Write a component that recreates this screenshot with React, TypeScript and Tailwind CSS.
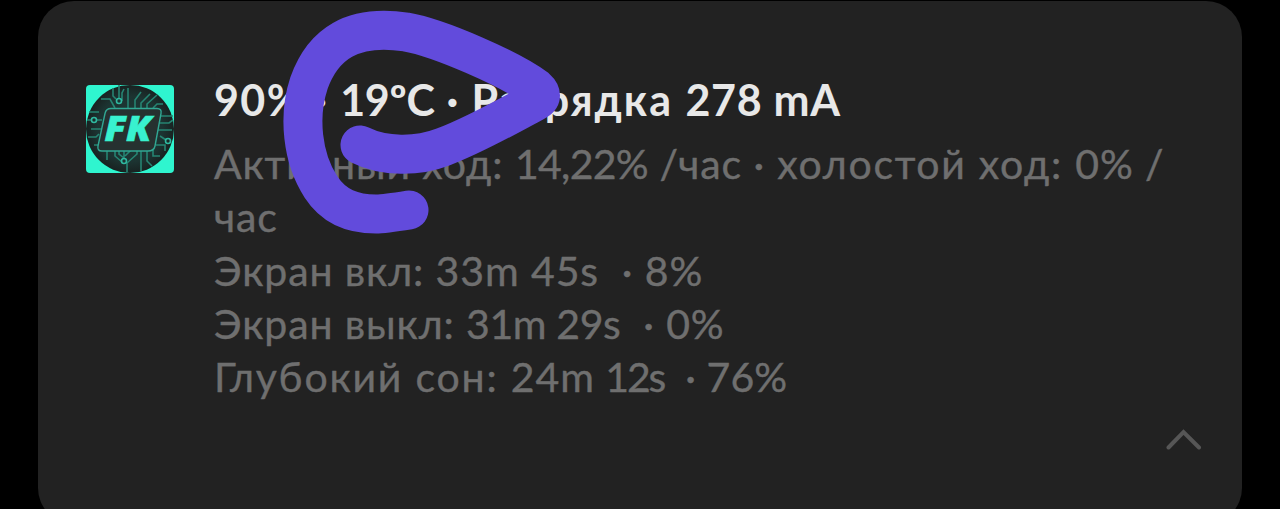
function AppLogo() {
  return (
    <svg viewBox="0 0 88 88" className="h-[88px] w-[88px] shrink-0" aria-hidden="true">
      <defs>
        <radialGradient id="chip" cx="50%" cy="50%" r="50%">
          <stop offset="0" stopColor="#1d3a38" />
          <stop offset="0.75" stopColor="#1c3331" />
          <stop offset="1" stopColor="#182221" />
        </radialGradient>
        <clipPath id="tile">
          <rect width="88" height="88" rx="4" />
        </clipPath>
      </defs>
      <rect width="88" height="88" rx="4" fill="#2ff5cf" />
      <g clipPath="url(#tile)">
        <circle cx="44" cy="44" r="44" fill="url(#chip)" />
        <g fill="none" stroke="#268472" strokeWidth="1.6">
          <path d="M33 0v13M27 3v8l3 3M42 3v20M49 23v-8l6-8M55 23v-5l9-9M61 23v-4l10-9M67 23l4-4h6M15 14h9l5 9M38 4l-2 4v8" />
          <path d="M3 27h10M1 35h4M11 35h5M5 44h10M2 52h8l3-3M8 60h4M75 31h12M73 38h10l4-3M72 45h14M74 51l6 4M70 60h9v6" />
          <path d="M21 65v10M29 65v6l7 6M33 65v4l5 4M38 65v8M45 65l-6 6M51 65v4l-10 9v9M55 65v21M61 65v11l5 5M67 65v6h7" />
          <g stroke="#2fb9a0">
            <circle cx="33" cy="16" r="2.5" />
            <circle cx="8" cy="35" r="2.5" />
            <circle cx="38" cy="76" r="2.5" />
            <circle cx="82" cy="56" r="2.5" />
          </g>
        </g>
        <path
          d="M25 23.500H71Q76 23.500 75 28.500L69 61Q68 66 62 66H16Q11 66 12 61L19 28.500Q20 23.500 25 23.500Z"
          fill="#263130"
          stroke="#31a793"
          strokeWidth="1.4"
        />
        <text
          x="18.500"
          y="56"
          textLength="47"
          lengthAdjust="spacingAndGlyphs"
          fill="#38f2cf"
          stroke="#38f2cf"
          strokeWidth="0.6"
          className="font-['Open_Sans',sans-serif] text-[35px] font-extrabold italic"
        >
          FK
        </text>
      </g>
    </svg>
  )
}

// Freehand marker drawn over the temperature reading
function MarkerStroke() {
  return (
    <svg
      viewBox="0 0 1280 509"
      className="pointer-events-none absolute top-0 left-0 h-[509px] w-[1280px]"
      aria-hidden="true"
    >
      <path
        d="M360 145C384 157 417 157 443 147C475 135 510 115 536 101Q545 96 536 88C510 69 440 38 406 32C352 24 323 44 309 83C298 116 302 158 321 187C334 207 353 214 376 214Q384 214 409 210"
        fill="none"
        stroke="#624bdc"
        strokeWidth="39"
        strokeLinecap="round"
        strokeLinejoin="round"
      />
    </svg>
  )
}

export default function App() {
  return (
    <div className="relative h-[509px] w-[1280px] overflow-hidden bg-black px-[38px] pt-px font-['Lato','Open_Sans',sans-serif]">
      <div className="flex h-[523px] w-[1204px] items-start rounded-[36px] bg-[#222222] pl-12">
        <div className="pt-[84px]">
          <AppLogo />
        </div>
        <div className="ml-10 pt-[72px] whitespace-pre">
          <h1 className="h-[64px] text-[43px] leading-[54px] font-bold tracking-[1.4px] text-[#e8e8e8]">
            90% · <span className="tracking-[-0.3px]">19ºC</span> · <span className="tracking-[2px]">Разрядка </span>
            <span className="tracking-[0.7px]">278 mA</span>
          </h1>
          <div className="text-[41px] leading-[53.3px] tracking-[0.9px] text-[#6f6f6f] [-webkit-text-stroke:0.4px_#6f6f6f]">
            <p>
              Активный ход: <span className="tracking-[-0.7px]">14,22%</span> /час ·
              <span className="tracking-[1.7px]"> холостой ход: </span>0% /
            </p>
            <p>час</p>
            <p>Экран вкл: 33m 45s  · 8%</p>
            <p>
              Экран выкл: <span className="tracking-[-0.4px]">31m 29s</span>  · 0%
            </p>
            <p>
              <span className="tracking-[1.8px]">Глубокий сон: </span>24m
              <span className="tracking-[0px]"> </span>
              <span className="tracking-[-2.2px]">12s</span>
              <span className="tracking-[0.1px]">{'  · 76%'}</span>
            </p>
          </div>
        </div>
      </div>
      <svg
        viewBox="0 0 36 22"
        className="absolute top-[429px] left-[1166px] h-[22px] w-[36px]"
        fill="none"
        stroke="#565656"
        strokeWidth="4"
        strokeLinecap="round"
      >
        <path d="M2.5 18.5L17.5 3L33 18.5" />
      </svg>
      <MarkerStroke />
    </div>
  )
}
